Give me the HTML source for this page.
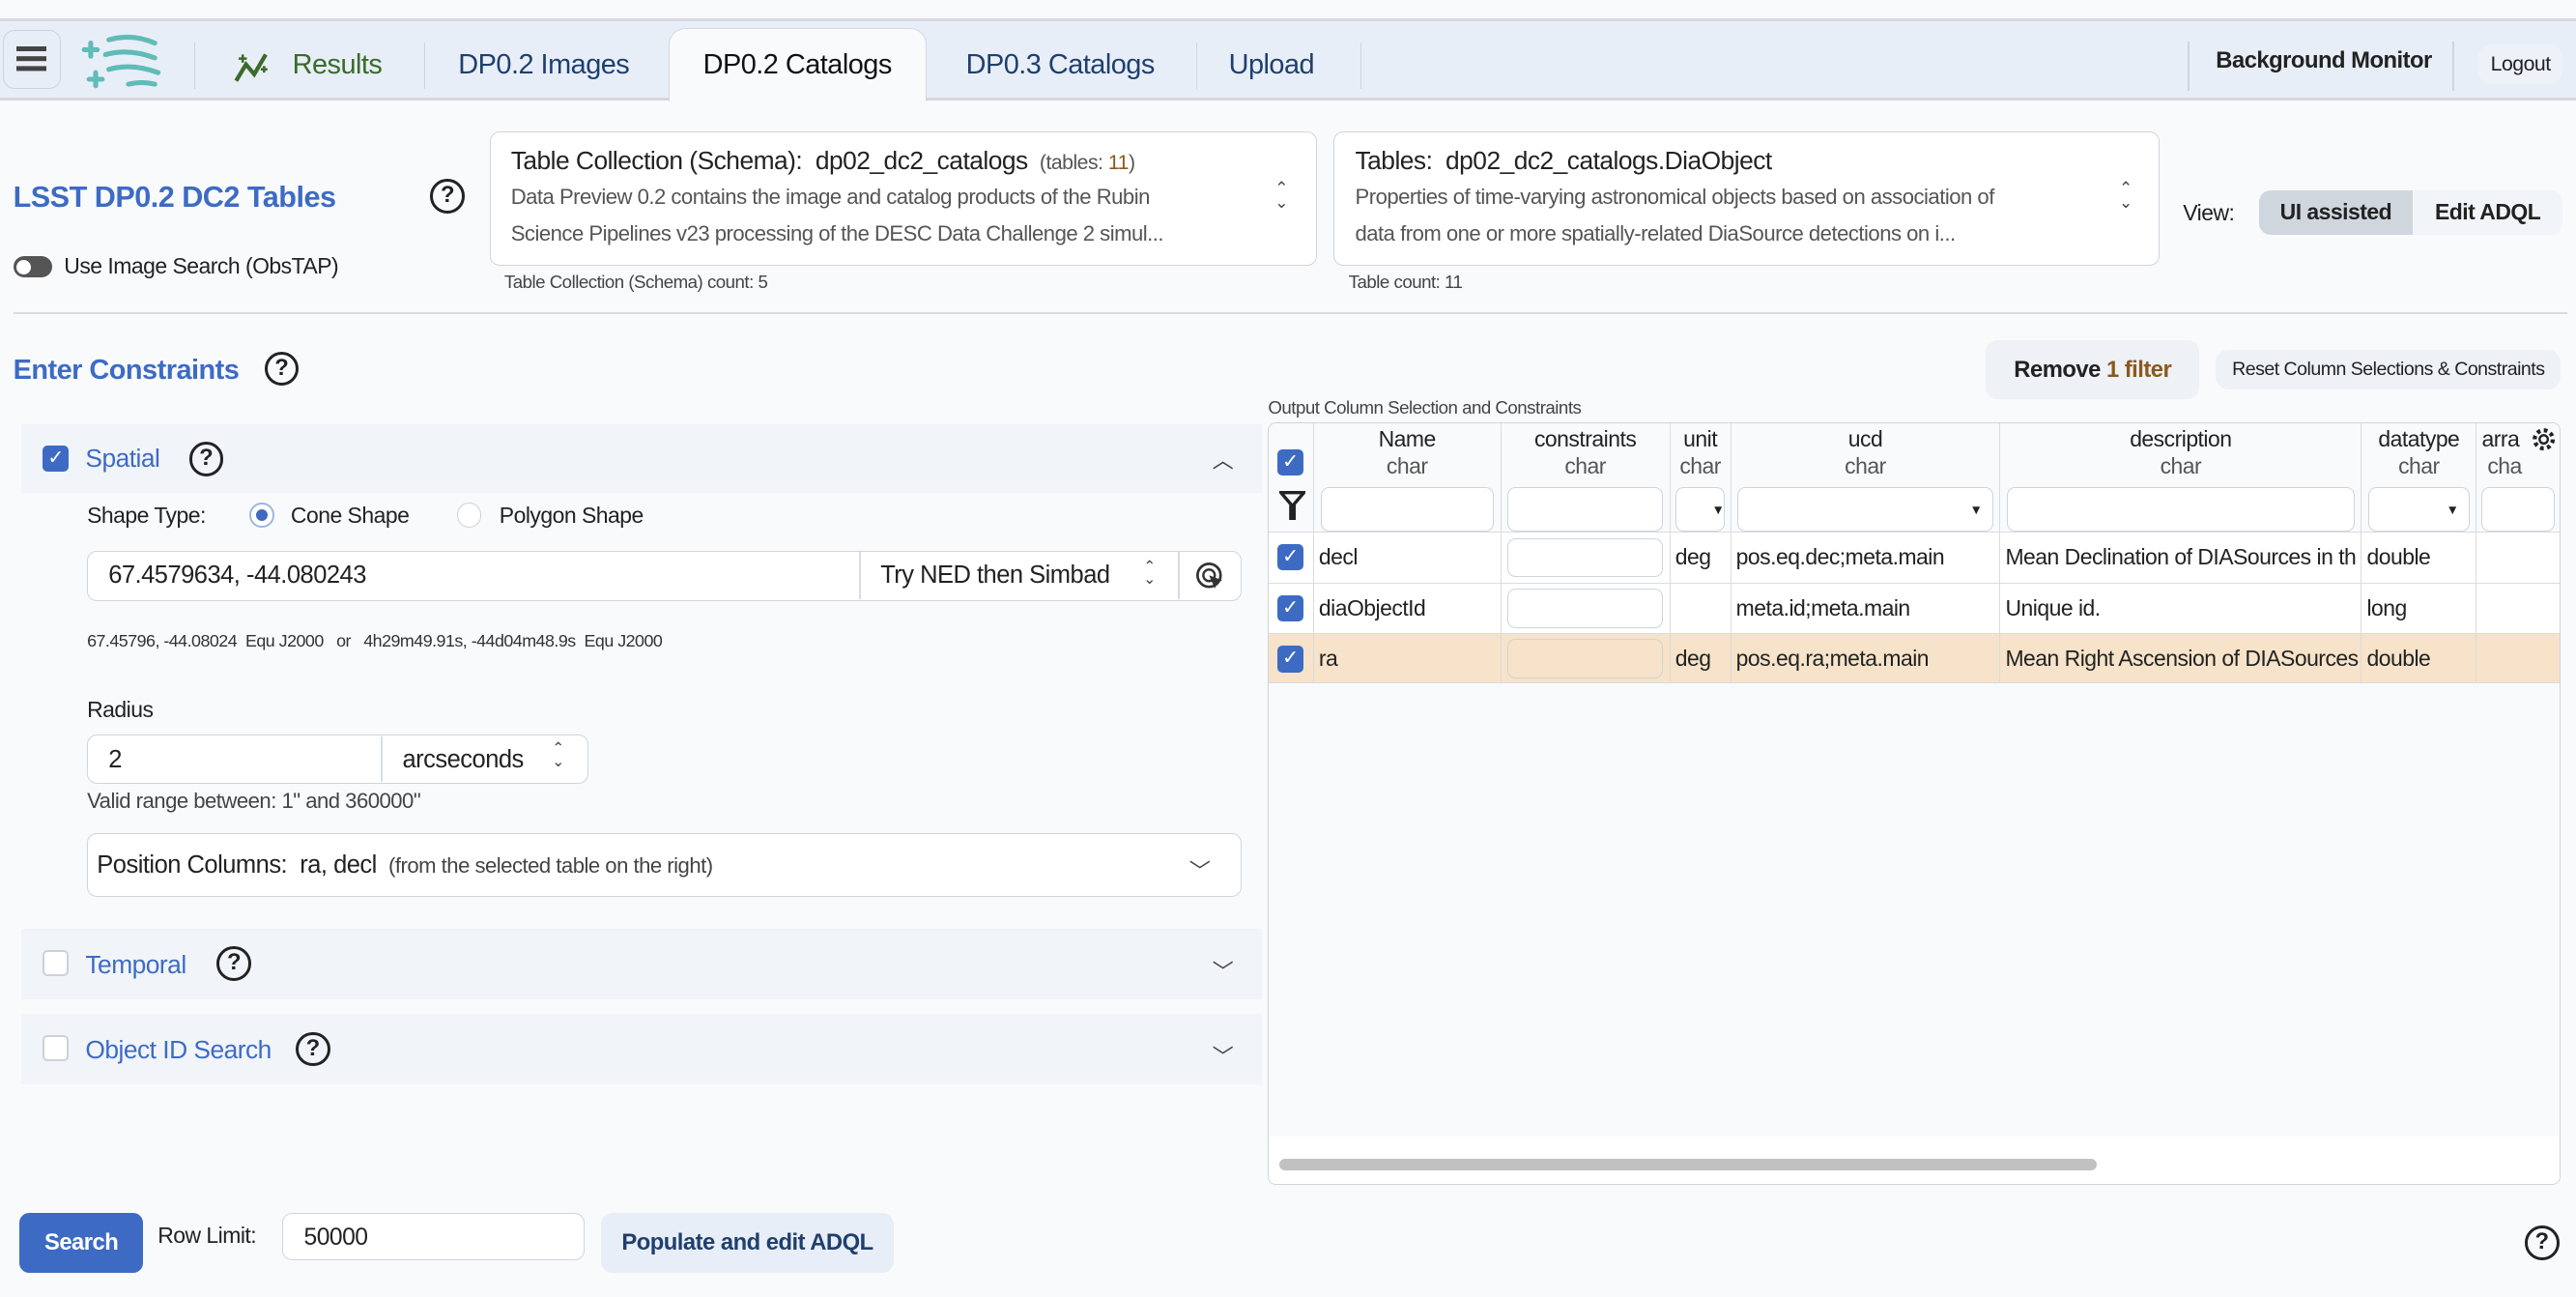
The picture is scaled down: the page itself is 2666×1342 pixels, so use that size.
<!DOCTYPE html>
<html><head><meta charset="utf-8"><style>
*{box-sizing:border-box}
html,body{margin:0;padding:0;width:2666px;height:1342px;overflow:hidden;background:#f9fafc}
#r{zoom:1.7;width:1568px;height:789px;position:relative;font-family:"Liberation Sans",sans-serif;color:#222;letter-spacing:-0.3px}
.a{position:absolute;white-space:nowrap}
.nav{position:absolute;left:0;top:11px;width:1568px;height:50px;background:#e8eef7;border-top:2px solid #d4d8de;border-bottom:2px solid #d4d8de}
.dv{position:absolute;width:1px;background:#cfd5dd}
.tab{position:absolute;top:30px;font-size:17px;color:#1f3f6e}
.q{position:absolute;width:21px;height:21px;border:2px solid #222;border-radius:50%;font-size:14px;font-weight:bold;text-align:center;line-height:17px;letter-spacing:0}
.box{position:absolute;background:#fff;border:1px solid #d0d5dc;border-radius:6px}
.cb{position:absolute;width:16px;height:16px;border-radius:3px;background:#3d6bc4;color:#fff;font-size:12px;line-height:16px;text-align:center;letter-spacing:0}
.cbe{position:absolute;width:16px;height:16px;border-radius:3px;border:1.5px solid #cdd2d9;background:#fff}
.sec{position:absolute;left:13px;width:755px;background:#f1f4f9}
.blue{color:#3d6bc4}
.chev{position:absolute;font-size:13px;color:#444}
td,th{border-right:1px solid #d8dce2;border-bottom:1px solid #d8dce2;padding:0 3px;font-weight:normal;font-size:13.5px;white-space:nowrap;overflow:hidden}
table{border-collapse:collapse;table-layout:fixed}
.inp{background:#fff;border:1px solid #cfd4db;border-radius:5px;height:27px}
</style></head><body><div id="r">
<div class="nav"></div>
<div class="box" style="left:2px;top:18px;width:35px;height:36px;background:#e8eef7;border-color:#cdd3dc;border-radius:7px"></div>
<div class="a" style="left:10px;top:28px;width:18px;height:3px;background:#444;box-shadow:0 6px 0 #444,0 12px 0 #444"></div>
<svg class="a" style="left:48px;top:18px" width="54" height="38" viewBox="0 0 54 38"><g stroke="#5fbcb8" stroke-width="3" fill="none" stroke-linecap="round"><path d="M18 6q14-4 28 2"/><path d="M16 15q14-4 30 2"/><path d="M18 24q14-4 30 2"/><path d="M30 33q8-2 16 0"/><path d="M7 8v8M3 12h8"/><path d="M10 26v8M6 30h8"/></g></svg>
<div class="dv" style="left:118px;top:26px;height:28px"></div>
<svg class="a" style="left:142px;top:31px" width="24" height="20" viewBox="0 0 24 20"><path d="M2 18l6-10 5 6 7-12" stroke="#3a6b2a" stroke-width="2.5" fill="none"/><path d="M6 2v5M3.5 4.5h5M19 9v4M17 11h4" stroke="#3a6b2a" stroke-width="1.5"/></svg>
<div class="tab" style="left:178px;color:#3a6b2a">Results</div>
<div class="dv" style="left:258px;top:26px;height:28px"></div>
<div class="tab" style="left:279px">DP0.2 Images</div>
<div class="a" style="left:407px;top:17px;width:157px;height:45px;background:#f9fafc;border:1px solid #d4d8de;border-bottom:none;border-radius:10px 10px 0 0"></div>
<div class="tab" style="left:428px;color:#111">DP0.2 Catalogs</div>
<div class="tab" style="left:588px">DP0.3 Catalogs</div>
<div class="dv" style="left:728px;top:26px;height:28px"></div>
<div class="tab" style="left:748px">Upload</div>
<div class="dv" style="left:828px;top:26px;height:28px"></div>
<div class="dv" style="left:1332px;top:25px;height:30px"></div>
<div class="a" style="left:1349px;top:29px;font-size:14px;font-weight:bold;color:#222">Background Monitor</div>
<div class="dv" style="left:1493px;top:25px;height:30px"></div>
<div class="a" style="left:1509px;top:27px;width:51px;height:24px;background:#eef2f8;border-radius:8px;font-size:12.5px;text-align:center;line-height:24px">Logout</div>

<div class="a blue" style="left:8px;top:110px;font-size:18px;font-weight:bold">LSST DP0.2 DC2 Tables</div>
<div class="q" style="left:262px;top:109px">?</div>
<div class="a" style="left:8px;top:156px;width:24px;height:13px;border-radius:7px;background:#555"></div>
<div class="a" style="left:10px;top:158px;width:9px;height:9px;border-radius:50%;background:#fff"></div>
<div class="a" style="left:39px;top:154px;font-size:13.5px">Use Image Search (ObsTAP)</div>

<div class="box" style="left:298px;top:80px;width:504px;height:82px"></div>
<div class="a" style="left:311px;top:89px;font-size:15.5px">Table Collection (Schema):&nbsp; dp02_dc2_catalogs <span style="font-size:12.5px;color:#555">&nbsp;(tables: <span style="color:#8a5a1e">11</span>)</span></div>
<div class="a" style="left:311px;top:109px;font-size:13px;color:#555;line-height:22px">Data Preview 0.2 contains the image and catalog products of the Rubin<br>Science Pipelines v23 processing of the DESC Data Challenge 2 simul...</div>
<div class="a" style="left:776px;top:110px;font-size:10px;line-height:9px;color:#444">⌃<br>⌄</div>
<div class="a" style="left:307px;top:165px;font-size:11px;color:#444">Table Collection (Schema) count: 5</div>

<div class="box" style="left:812px;top:80px;width:503px;height:82px"></div>
<div class="a" style="left:825px;top:89px;font-size:15.5px">Tables:&nbsp; dp02_dc2_catalogs.DiaObject</div>
<div class="a" style="left:825px;top:109px;font-size:13px;color:#555;line-height:22px">Properties of time-varying astronomical objects based on association of<br>data from one or more spatially-related DiaSource detections on i...</div>
<div class="a" style="left:1290px;top:110px;font-size:10px;line-height:9px;color:#444">⌃<br>⌄</div>
<div class="a" style="left:821px;top:165px;font-size:11px;color:#444">Table count: 11</div>

<div class="a" style="left:1329px;top:122px;font-size:13.5px">View:</div>
<div class="a" style="left:1375px;top:116px;width:185px;height:27px;background:#f1f4f8;border-radius:7px"></div>
<div class="a" style="left:1375px;top:116px;width:94px;height:27px;background:#d0d6de;border-radius:7px 0 0 7px;font-size:13.5px;font-weight:bold;text-align:center;line-height:27px">UI assisted</div>
<div class="a" style="left:1469px;top:116px;width:91px;height:27px;font-size:13.5px;font-weight:bold;text-align:center;line-height:27px">Edit ADQL</div>

<div class="a" style="left:8px;top:190px;width:1555px;height:1px;background:#d8dce2"></div>

<div class="a blue" style="left:8px;top:216px;font-size:17px;font-weight:bold">Enter Constraints</div>
<div class="q" style="left:161px;top:214px">?</div>

<div class="a" style="left:1209px;top:207px;width:130px;height:36px;background:#eef1f5;border-radius:7px;font-size:14px;font-weight:bold;text-align:center;line-height:36px">Remove <span style="color:#8a5a1e">1 filter</span></div>
<div class="a" style="left:1349px;top:213px;width:210px;height:24px;background:#eef1f5;border-radius:8px;font-size:11.5px;text-align:center;line-height:24px">Reset Column Selections &amp; Constraints</div>

<div class="sec" style="top:258px;height:42px"></div>
<div class="cb" style="left:26px;top:271px">✓</div>
<div class="a blue" style="left:52px;top:270px;font-size:15.5px">Spatial</div>
<div class="q" style="left:115px;top:269px">?</div>
<div class="chev" style="left:738px;top:270px">︿</div>

<div class="a" style="left:53px;top:306px;font-size:13.5px">Shape Type:</div>
<div class="a" style="left:152px;top:306px;width:15px;height:15px;border-radius:50%;border:1.5px solid #9db6e3;background:#fff"></div>
<div class="a" style="left:156px;top:310px;width:7px;height:7px;border-radius:50%;background:#3d6bc4"></div>
<div class="a" style="left:177px;top:306px;font-size:13.5px">Cone Shape</div>
<div class="a" style="left:278px;top:306px;width:15px;height:15px;border-radius:50%;border:1px solid #cdd2d9;background:#fff"></div>
<div class="a" style="left:304px;top:306px;font-size:13.5px">Polygon Shape</div>

<div class="box" style="left:53px;top:335px;width:703px;height:31px"></div>
<div class="a" style="left:523px;top:336px;width:1px;height:29px;background:#d8dce2"></div>
<div class="a" style="left:717px;top:336px;width:1px;height:29px;background:#d8dce2"></div>
<div class="a" style="left:66px;top:342px;font-size:15px">67.4579634, -44.080243</div>
<div class="a" style="left:536px;top:342px;font-size:15px">Try NED then Simbad</div>
<div class="a" style="left:696px;top:341px;font-size:9px;line-height:8px;color:#444">⌃<br>⌄</div>
<svg class="a" style="left:727px;top:341px" width="20" height="20" viewBox="0 0 20 20"><circle cx="9" cy="9" r="7" stroke="#333" stroke-width="1.6" fill="none"/><circle cx="9" cy="9" r="3.5" stroke="#333" stroke-width="1.4" fill="none"/><path d="M9 9l8 3-3 1.5L12.5 17z" fill="#333"/></svg>
<div class="a" style="left:53px;top:384px;font-size:10.5px;color:#333">67.45796, -44.08024&nbsp; Equ J2000 &nbsp; or &nbsp; 4h29m49.91s, -44d04m48.9s&nbsp; Equ J2000</div>

<div class="a" style="left:53px;top:424px;font-size:13.5px">Radius</div>
<div class="box" style="left:53px;top:447px;width:305px;height:30px"></div>
<div class="a" style="left:232px;top:448px;width:1px;height:28px;background:#d8dce2"></div>
<div class="a" style="left:66px;top:454px;font-size:15px">2</div>
<div class="a" style="left:245px;top:454px;font-size:15px">arcseconds</div>
<div class="a" style="left:336px;top:452px;font-size:9px;line-height:8px;color:#444">⌃<br>⌄</div>
<div class="a" style="left:53px;top:480px;font-size:13px;color:#444">Valid range between: 1" and 360000"</div>

<div class="box" style="left:53px;top:507px;width:703px;height:39px"></div>
<div class="a" style="left:59px;top:518px;font-size:15px">Position Columns:&nbsp; ra, decl <span style="font-size:13px;color:#444">&nbsp;(from the selected table on the right)</span></div>
<div class="chev" style="left:724px;top:520px">﹀</div>

<div class="sec" style="top:565px;height:43px"></div>
<div class="cbe" style="left:26px;top:578px"></div>
<div class="a blue" style="left:52px;top:578px;font-size:15.5px">Temporal</div>
<div class="q" style="left:132px;top:576px">?</div>
<div class="chev" style="left:738px;top:581px">﹀</div>

<div class="sec" style="top:617px;height:43px"></div>
<div class="cbe" style="left:26px;top:630px"></div>
<div class="a blue" style="left:52px;top:630px;font-size:15.5px">Object ID Search</div>
<div class="q" style="left:180px;top:628px">?</div>
<div class="chev" style="left:738px;top:633px">﹀</div>

<div class="a" style="left:12px;top:738px;width:75px;height:37px;background:#3d6bc4;border-radius:6px;color:#fff;font-size:14px;font-weight:bold;text-align:center;line-height:37px">Search</div>
<div class="a" style="left:96px;top:744px;font-size:13.5px">Row Limit:</div>
<div class="box" style="left:172px;top:738px;width:184px;height:29px"></div>
<div class="a" style="left:185px;top:745px;font-size:14.5px">50000</div>
<div class="a" style="left:366px;top:738px;width:178px;height:37px;background:#e8eef7;border-radius:7px;color:#1f3f6e;font-size:14px;font-weight:bold;text-align:center;line-height:37px">Populate and edit ADQL</div>
<div class="q" style="left:1537px;top:746px">?</div>

<div class="a" style="left:772px;top:242px;font-size:11px;color:#444">Output Column Selection and Constraints</div>
<div class="a" style="left:772px;top:257px;width:787px;height:464px;border:1px solid #d0d5dc;border-radius:5px;background:#f9fafc;overflow:hidden">
<table style="width:786px">
<colgroup><col style="width:27px"><col style="width:114px"><col style="width:103px"><col style="width:37px"><col style="width:164px"><col style="width:220px"><col style="width:70px"><col style="width:51px"></colgroup>
<tr style="height:65px;background:#f9fafc;vertical-align:top">
<th style="position:relative;height:65px"><div class="cb" style="left:5px;top:16px">✓</div><svg class="a" style="left:6px;top:41px" width="16" height="18" viewBox="0 0 16 18"><path d="M1 1h14L9 8v9H7V8z" fill="none" stroke="#222" stroke-width="2"/></svg></th>
<th style="text-align:center;line-height:17px;padding-top:1px">Name<br><span style="color:#555">char</span><div class="inp" style="margin:4px 1px 0"></div></th>
<th style="text-align:center;line-height:17px;padding-top:1px">constraints<br><span style="color:#555">char</span><div class="inp" style="margin:4px 1px 0"></div></th>
<th style="text-align:center;line-height:17px;padding-top:1px">unit<br><span style="color:#555">char</span><div class="inp" style="margin:4px 0 0;font-size:8px;text-align:right;line-height:27px">▼</div></th>
<th style="text-align:center;line-height:17px;padding-top:1px">ucd<br><span style="color:#555">char</span><div class="inp" style="margin:4px 1px 0;font-size:8px;text-align:right;line-height:27px;padding-right:6px">▼</div></th>
<th style="text-align:center;line-height:17px;padding-top:1px">description<br><span style="color:#555">char</span><div class="inp" style="margin:4px 1px 0"></div></th>
<th style="text-align:center;line-height:17px;padding-top:1px">datatype<br><span style="color:#555">char</span><div class="inp" style="margin:4px 1px 0;font-size:8px;text-align:right;line-height:27px;padding-right:6px">▼</div></th>
<th style="text-align:left;line-height:17px;padding-top:1px;border-right:none">arra<br><span style="color:#555">&nbsp;cha</span><div class="inp" style="margin:4px 0 0"></div></th>
</tr>
<tr style="height:31px;background:#fff"><td style="position:relative"><div class="cb" style="left:5px;top:7px">✓</div></td><td>decl</td><td><div class="inp" style="height:24px;margin:0 1px"></div></td><td>deg</td><td>pos.eq.dec;meta.main</td><td>Mean Declination of DIASources in th</td><td>double</td><td style="border-right:none"></td></tr>
<tr style="height:31px;background:#fff"><td style="position:relative"><div class="cb" style="left:5px;top:7px">✓</div></td><td>diaObjectId</td><td><div class="inp" style="height:24px;margin:0 1px"></div></td><td></td><td>meta.id;meta.main</td><td>Unique id.</td><td>long</td><td style="border-right:none"></td></tr>
<tr style="height:30px;background:#f6e3c9"><td style="position:relative"><div class="cb" style="left:5px;top:7px">✓</div></td><td>ra</td><td><div class="inp" style="height:24px;margin:0 1px;background:#f6e3c9"></div></td><td>deg</td><td>pos.eq.ra;meta.main</td><td>Mean Right Ascension of DIASources</td><td>double</td><td style="border-right:none"></td></tr>
</table>
<svg class="a" style="left:768px;top:2px" width="16" height="16" viewBox="0 0 16 16"><circle cx="8" cy="8" r="2.5" fill="none" stroke="#222" stroke-width="1.4"/><circle cx="8" cy="8" r="5.5" fill="none" stroke="#222" stroke-width="2.5" stroke-dasharray="2.2 2.1"/></svg>
<div class="a" style="left:0;top:434px;width:786px;height:30px;background:#fff"></div>
<div class="a" style="left:6px;top:448px;width:498px;height:7px;border-radius:4px;background:#c1c1c1"></div>
</div>
</div></body></html>
